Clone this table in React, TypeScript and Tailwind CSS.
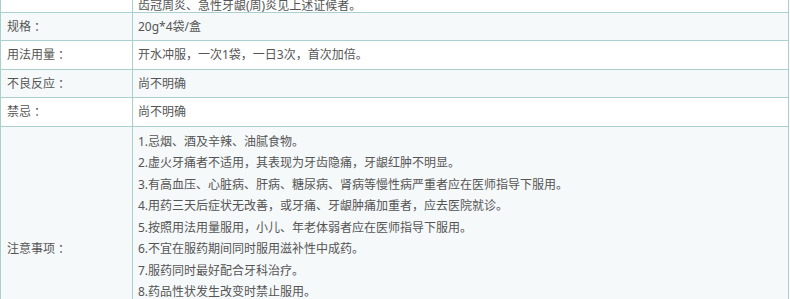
const ROWS = [
  { label: "规格", value: "20g*4袋/盒", h: "h-[28px]", alt: true },
  { label: "用法用量", value: "开水冲服，一次1袋，一日3次，首次加倍。", h: "h-[29px]", alt: false },
  { label: "不良反应", value: "尚不明确", h: "h-[28px]", alt: true },
  { label: "禁忌", value: "尚不明确", h: "h-[29px]", alt: false },
];

const NOTES = [
  "1.忌烟、酒及辛辣、油腻食物。",
  "2.虚火牙痛者不适用，其表现为牙齿隐痛，牙龈红肿不明显。",
  "3.有高血压、心脏病、肝病、糖尿病、肾病等慢性病严重者应在医师指导下服用。",
  "4.用药三天后症状无改善，或牙痛、牙龈肿痛加重者，应去医院就诊。",
  "5.按照用法用量服用，小儿、年老体弱者应在医师指导下服用。",
  "6.不宜在服药期间同时服用滋补性中成药。",
  "7.服药同时最好配合牙科治疗。",
  "8.药品性状发生改变时禁止服用。",
  "9.儿童必须在成人监护下使用。",
  "10.请将本品放在儿童不能接触的地方。",
  "11.如正在使用其他药品，使用本品前请咨询医师或药师。",
];

// label with a centred full-width colon
function Label({ text }: { text: string }) {
  return (
    <>
      {text}
      <span style={{ fontFamily: '"Noto Sans CJK TC", sans-serif' }}>：</span>
    </>
  );
}

export default function App() {
  return (
    <div
      className="w-[789px] overflow-hidden border-x border-[#a9cfcf] text-[12px] text-[#555]"
      style={{ fontFamily: '"Noto Sans", "Noto Sans CJK SC", sans-serif' }}
    >
      {/* tail of the previous row (功能主治), scrolled mostly out of view */}
      <div className="grid h-[12px] grid-cols-[132px_1fr] overflow-hidden bg-white">
        <div className="border-r border-[#a9cfcf]" />
        <div className="flex items-end pl-[5px]">
          <span className="mb-[5px] whitespace-nowrap leading-[12px]">
            齿冠周炎、急性牙龈(周)炎见上述证候者。
          </span>
        </div>
      </div>

      {ROWS.map((r) => (
        <div
          key={r.label}
          className={`grid grid-cols-[132px_1fr] border-t border-[#a9cfcf] ${r.h} ${
            r.alt ? "bg-[#f5f9fa]" : "bg-white"
          }`}
        >
          <div className="flex items-center border-r border-[#a9cfcf] pl-[6px]">
            <Label text={r.label} />
          </div>
          <div className="flex items-center pl-[5px]">{r.value}</div>
        </div>
      ))}

      <div className="grid grid-cols-[132px_1fr] border-t border-[#a9cfcf] bg-[#f5f9fa]">
        <div className="flex items-center border-r border-[#a9cfcf] pl-[6px]">
          <Label text="注意事项" />
        </div>
        <div className="pl-[5px] pt-[4px] pb-[4px]">
          {NOTES.map((n) => (
            <p key={n} className="leading-[21.43px]">
              {n}
            </p>
          ))}
        </div>
      </div>
    </div>
  );
}
